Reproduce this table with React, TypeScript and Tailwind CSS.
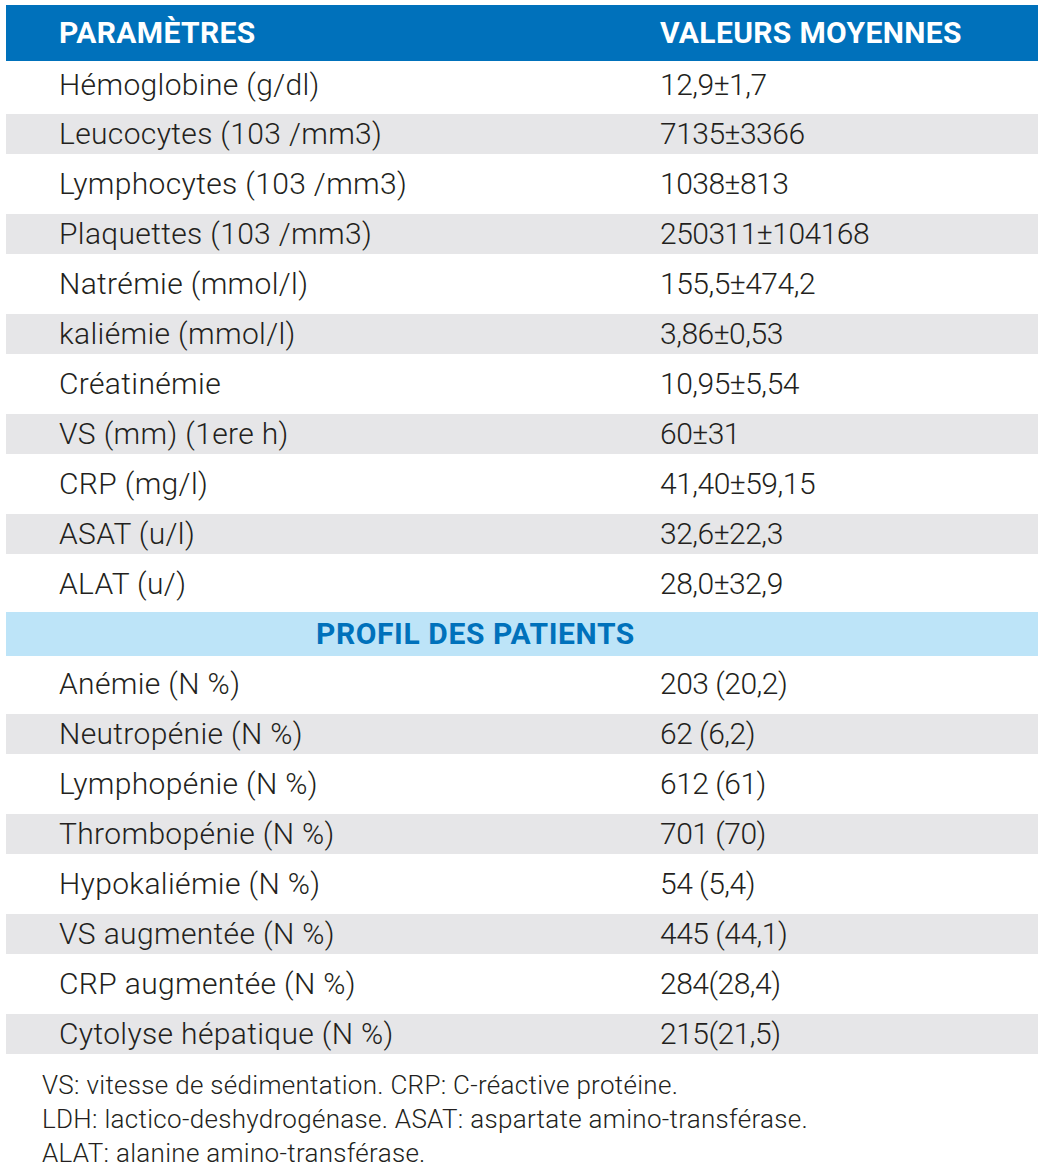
import React from 'react';

type Row = { label: string; value: string };

const biologie: Row[] = [
  { label: 'Hémoglobine (g/dl)', value: '12,9±1,7' },
  { label: 'Leucocytes (103 /mm3)', value: '7135±3366' },
  { label: 'Lymphocytes (103 /mm3)', value: '1038±813' },
  { label: 'Plaquettes (103 /mm3)', value: '250311±104168' },
  { label: 'Natrémie (mmol/l)', value: '155,5±474,2' },
  { label: 'kaliémie (mmol/l)', value: '3,86±0,53' },
  { label: 'Créatinémie', value: '10,95±5,54' },
  { label: 'VS (mm) (1ere h)', value: '60±31' },
  { label: 'CRP (mg/l)', value: '41,40±59,15' },
  { label: 'ASAT (u/l)', value: '32,6±22,3' },
  { label: 'ALAT (u/)', value: '28,0±32,9' },
];

const profil: Row[] = [
  { label: 'Anémie (N %)', value: '203 (20,2)' },
  { label: 'Neutropénie (N %)', value: '62 (6,2)' },
  { label: 'Lymphopénie (N %)', value: '612 (61)' },
  { label: 'Thrombopénie (N %)', value: '701 (70)' },
  { label: 'Hypokaliémie (N %)', value: '54 (5,4)' },
  { label: 'VS augmentée (N %)', value: '445 (44,1)' },
  { label: 'CRP augmentée (N %)', value: '284(28,4)' },
  { label: 'Cytolyse hépatique (N %)', value: '215(21,5)' },
];

function TableRow({ row, shaded, first }: { row: Row; shaded: boolean; first?: boolean }) {
  return (
    <div className={first ? 'h-[48px] flex items-center' : 'h-[50px] flex items-center'}>
      <div
        className={`w-full h-[40px] flex items-center pl-[53px] ${shaded ? 'bg-[#e6e6e8]' : ''}`}
      >
        <span className="w-[601px] shrink-0 tracking-[0.35px]">{row.label}</span>
        <span className="tracking-[-0.5px]">{row.value}</span>
      </div>
    </div>
  );
}

export default function App() {
  return (
    <div
      className="bg-white w-[1044px] h-[1170px] pt-[5px] px-[6px] text-[#231f20] font-light text-[30px] leading-none"
      style={{ fontFamily: 'Roboto, "Liberation Sans", sans-serif' }}
    >
      {/* Header */}
      <div className="h-[56px] bg-[#0071bb] flex items-center pl-[53px] text-white font-bold tracking-[0.35px]">
        <span className="w-[601px] shrink-0">PARAMÈTRES</span>
        <span>VALEURS MOYENNES</span>
      </div>

      {biologie.map((row, i) => (
        <TableRow key={row.label} row={row} shaded={i % 2 === 1} first={i === 0} />
      ))}

      <div className="h-[50px] flex items-center">
        <div className="w-full h-[44px] bg-[#bde4f8] flex items-center pl-[310px] text-[#0071bb] font-bold tracking-[0.6px]">
          PROFIL DES PATIENTS
        </div>
      </div>

      {profil.map((row, i) => (
        <TableRow key={row.label} row={row} shaded={i % 2 === 1} />
      ))}

      {/* Notes */}
      <div className="pl-[36px] pt-[9px] text-[26px] leading-[34px] tracking-[0.3px]">
        <p>VS: vitesse de sédimentation. CRP: C-réactive protéine.</p>
        <p>LDH: lactico-deshydrogénase. ASAT: aspartate amino-transférase.</p>
        <p>ALAT: alanine amino-transférase.</p>
      </div>
    </div>
  );
}
